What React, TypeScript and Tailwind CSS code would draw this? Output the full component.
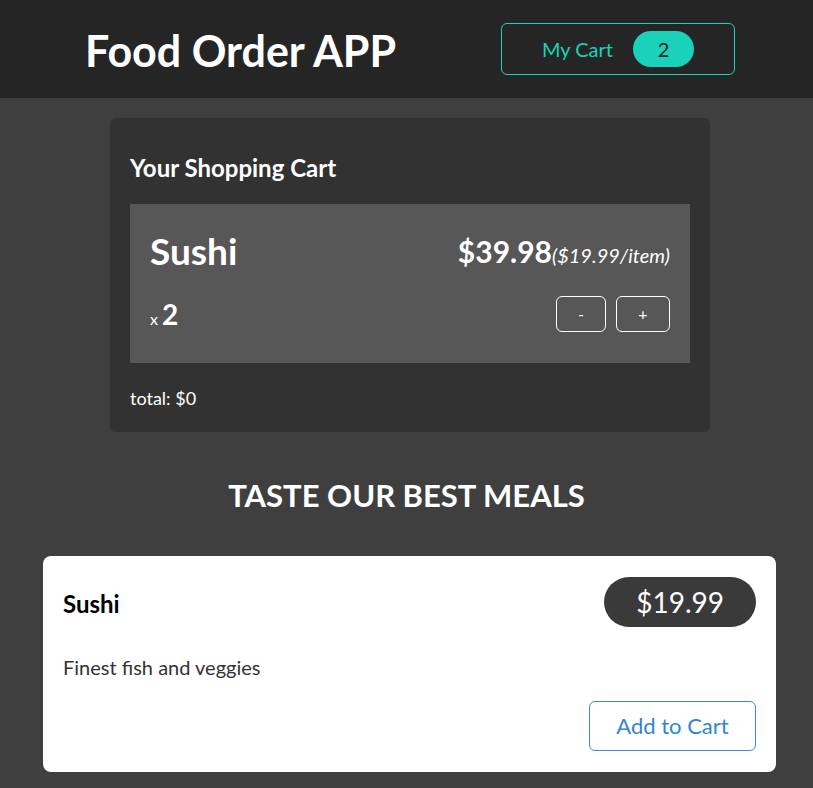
export default function App() {
  return (
    <div className="min-h-screen bg-[#3f3f3f] font-['Lato','Noto_Sans',sans-serif]">
      {/* header */}
      <header className="h-[98px] bg-[#252525] flex items-center justify-between pl-[85px] pr-[78px]">
        <h1 className="text-[43px] font-bold text-white leading-none mt-[3px]">Food Order APP</h1>
        <button className="w-[234px] h-[52px] border border-[#1ad1b9] rounded-md flex items-center justify-center gap-5 text-[#1ad1b9] text-xl">
          <span>My Cart</span>
          <span className="w-[61px] h-[36px] rounded-full bg-[#1ad1b9] text-[#222] flex items-center justify-center">
            2
          </span>
        </button>
      </header>

      {/* cart */}
      <section className="w-[600px] ml-[110px] mt-5 bg-[#323232] rounded-md p-5 text-white">
        <h2 className="text-2xl font-bold mt-[14px] mb-[20px]">Your Shopping Cart</h2>
        <div className="bg-[#575757] px-5 pt-[28px] pb-[28px]">
          <div className="flex items-end justify-between">
            <span className="text-[37px] font-bold leading-none">Sushi</span>
            <span className="flex items-baseline">
              <span className="text-[30px] font-bold leading-none">$39.98</span>
              <span className="text-xl italic">($19.99/item)</span>
            </span>
          </div>
          <div className="flex items-center justify-between mt-[24px]">
            <span className="flex items-baseline gap-1">
              <span className="text-base">x</span>
              <span className="text-[28px] font-bold">2</span>
            </span>
            <div className="flex gap-[10px]">
              <button className="w-[50px] h-[36px] border border-white rounded-md text-base">-</button>
              <button className="w-[54px] h-[36px] border border-white rounded-md text-base">+</button>
            </div>
          </div>
        </div>
        <p className="text-lg mt-[21px]">total: $0</p>
      </section>

      {/* meals */}
      <h2 className="text-center text-white text-[31px] font-bold mt-[40px] mb-[37px]">TASTE OUR BEST MEALS</h2>
      <div className="ml-[43px] mr-[37px] bg-white rounded-lg px-5 pt-[21px] pb-[21px]">
        <div className="flex items-center justify-between">
          <h3 className="text-2xl font-bold text-black mt-[4px]">Sushi</h3>
          <span className="h-[50px] px-[32px] rounded-full bg-[#3a3a3a] text-white text-[28px] flex items-center">
            $19.99
          </span>
        </div>
        <p className="text-xl text-[#333] mt-[26px]">Finest fish and veggies</p>
        <div className="flex justify-end mt-[20px]">
          <button className="w-[167px] h-[50px] border border-[#3a8dd6] rounded-md text-[#2f86d2] text-[22px]">
            Add to Cart
          </button>
        </div>
      </div>
    </div>
  );
}
